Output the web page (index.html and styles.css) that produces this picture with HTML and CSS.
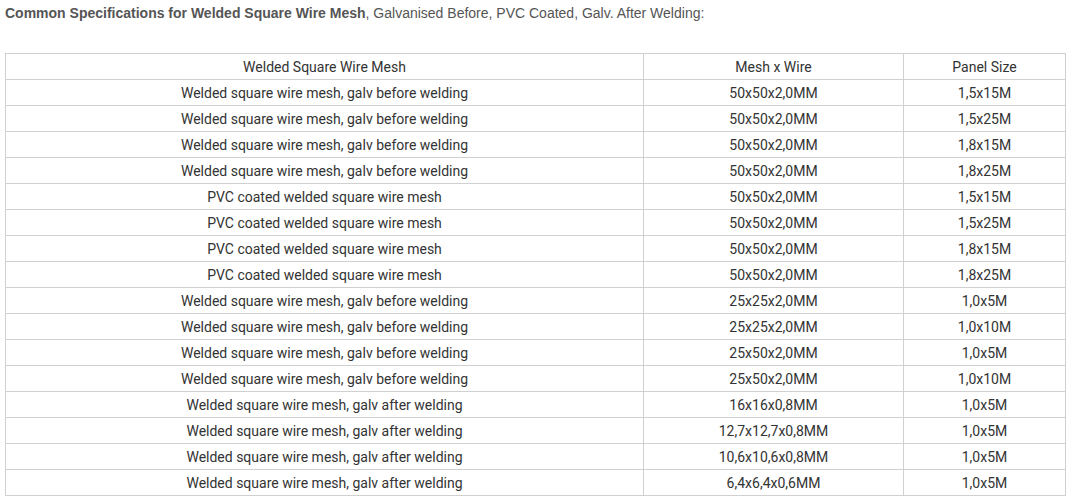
FILE: index.html
```html
<!DOCTYPE html>
<html>
<head>
<meta charset="utf-8">
<link rel="stylesheet" href="styles.css">
</head>
<body>
<p class="intro"><strong>Common Specifications for Welded Square Wire Mesh</strong>, Galvanised Before, PVC Coated, Galv. After Welding:</p>
<table class="spec">
<colgroup><col class="c1"><col class="c2"><col class="c3"></colgroup>
<tbody>
<tr><td>Welded Square Wire Mesh</td><td>Mesh x Wire</td><td>Panel Size</td></tr>
<tr><td>Welded square wire mesh, galv before welding</td><td>50x50x2,0MM</td><td>1,5x15M</td></tr>
<tr><td>Welded square wire mesh, galv before welding</td><td>50x50x2,0MM</td><td>1,5x25M</td></tr>
<tr><td>Welded square wire mesh, galv before welding</td><td>50x50x2,0MM</td><td>1,8x15M</td></tr>
<tr><td>Welded square wire mesh, galv before welding</td><td>50x50x2,0MM</td><td>1,8x25M</td></tr>
<tr><td>PVC coated welded square wire mesh</td><td>50x50x2,0MM</td><td>1,5x15M</td></tr>
<tr><td>PVC coated welded square wire mesh</td><td>50x50x2,0MM</td><td>1,5x25M</td></tr>
<tr><td>PVC coated welded square wire mesh</td><td>50x50x2,0MM</td><td>1,8x15M</td></tr>
<tr><td>PVC coated welded square wire mesh</td><td>50x50x2,0MM</td><td>1,8x25M</td></tr>
<tr><td>Welded square wire mesh, galv before welding</td><td>25x25x2,0MM</td><td>1,0x5M</td></tr>
<tr><td>Welded square wire mesh, galv before welding</td><td>25x25x2,0MM</td><td>1,0x10M</td></tr>
<tr><td>Welded square wire mesh, galv before welding</td><td>25x50x2,0MM</td><td>1,0x5M</td></tr>
<tr><td>Welded square wire mesh, galv before welding</td><td>25x50x2,0MM</td><td>1,0x10M</td></tr>
<tr><td>Welded square wire mesh, galv after welding</td><td>16x16x0,8MM</td><td>1,0x5M</td></tr>
<tr><td>Welded square wire mesh, galv after welding</td><td>12,7x12,7x0,8MM</td><td>1,0x5M</td></tr>
<tr><td>Welded square wire mesh, galv after welding</td><td>10,6x10,6x0,8MM</td><td>1,0x5M</td></tr>
<tr><td>Welded square wire mesh, galv after welding</td><td>6,4x6,4x0,6MM</td><td>1,0x5M</td></tr>
</tbody>
</table>
</body>
</html>
```
FILE: styles.css
```css
html, body {
  margin: 0;
  padding: 0;
  background: #fff;
}
body {
  padding: 5px 5px 0 5px;
}
.intro {
  margin: 0;
  font-family: "Liberation Sans", Arial, sans-serif;
  font-size: 14px;
  line-height: 16px;
  color: #555;
}
.intro strong {
  font-weight: bold;
}
.spec {
  margin-top: 32px;
  border-collapse: collapse;
  width: 1060px;
  table-layout: fixed;
  font-family: Roboto, "Liberation Sans", sans-serif;
  font-size: 14px;
  color: #333;
}
.c1 { width: 638px; }
.c2 { width: 260px; }
.c3 { width: 162px; }
.spec td {
  border: 1px solid #d0d0d0;
  height: 25px;
  padding: 0;
  text-align: center;
  vertical-align: middle;
  line-height: 18px;
  box-sizing: border-box;
}
.spec tr {
  height: 26px;
}
```
